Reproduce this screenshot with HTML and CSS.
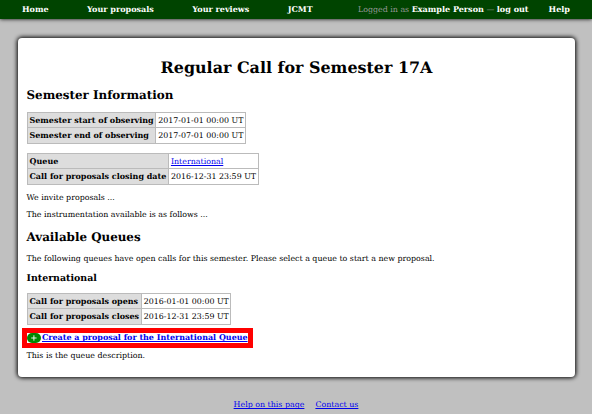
FILE: index.html
```html
<!DOCTYPE html>
<html lang="en">
<head>
<meta charset="utf-8">
<title>Regular Call for Semester 17A</title>
<link rel="stylesheet" href="styles.css">
</head>
<body>
<nav class="bar">
  <a class="home">Home</a><a class="proposals">Your proposals</a><a class="reviews">Your reviews</a><a>JCMT</a>
  <span class="user">Logged in as <a>Example Person</a> — <a>log out</a></span>
  <a class="help">Help</a>
</nav>
<main class="page">
  <h1>Regular Call for Semester 17A</h1>
  <h2>Semester Information</h2>
  <table>
    <tr><th>Semester start of observing</th><td>2017-01-01 00:00 UT</td></tr>
    <tr><th>Semester end of observing</th><td>2017-07-01 00:00 UT</td></tr>
  </table>
  <table class="queue">
    <tr><th>Queue</th><td><a href="#">International</a></td></tr>
    <tr><th>Call for proposals closing date</th><td>2016-12-31 23:59 UT</td></tr>
  </table>
  <p>We invite proposals ...</p>
  <p>The instrumentation available is as follows ...</p>
  <h2 class="available">Available Queues</h2>
  <p>The following queues have open calls for this semester. Please select a queue to start a new proposal.</p>
  <h3>International</h3>
  <table class="call">
    <tr><th>Call for proposals opens</th><td>2016-01-01 00:00 UT</td></tr>
    <tr><th>Call for proposals closes</th><td>2016-12-31 23:59 UT</td></tr>
  </table>
  <div class="create">
    <svg class="plus" viewBox="0 0 14 10"><rect width="14" height="10" rx="5" fill="#008800"/><path d="M4.2 5h5.4M6.9 2.3v5.4" stroke="#fff" stroke-width=".9"/></svg>
    <a href="#">Create a proposal for the International Queue</a>
  </div>
  <p class="description">This is the queue description.</p>
</main>
<footer><a href="#">Help on this page</a><a href="#">Contact us</a></footer>
</body>
</html>
```
FILE: styles.css
```css
* { box-sizing: border-box; }
body {
  margin: 0;
  height: 414px;
  overflow: hidden;
  background: #c0c0c0;
  color: #000;
  font: 7.9px/9.5px "DejaVu Serif", serif;
  text-rendering: geometricPrecision;
}
a { color: #0000ee; }
.bar {
  display: flex;
  align-items: center;
  height: 19.3px;
  padding: 1px 22px 0;
  background: #004400;
  color: #999;
  box-shadow: 0 0 4px #000;
  white-space: pre;
}
.bar a { color: #fff; font-size: 8.05px; font-weight: bold; }
.home, .proposals, .reviews { margin-right: 38.4px; }
.user { margin-left: auto; }
.help { margin-left: 20px; }
.page {
  height: 339px;
  margin: 18.7px 17px 0 18px;
  padding: 20px 8.5px 0;
  border-radius: 4px;
  background: #fff;
  box-shadow: 0 0 4px 1px #000;
}
h1 { margin: 0; font-size: 15.93px; line-height: 19px; text-align: center; }
h2 { margin: 11px 0 10px; font-size: 11.9px; line-height: 14px; }
.available { margin: 10.5px 0 9.5px; }
h3 { margin: 9.5px 0 8px; font-size: 9.45px; line-height: 12px; }
p { margin: 8px 0; }
table { border-collapse: collapse; }
th, td { height: 15.5px; padding: 1px 1.6px 0 2px; border: 1px solid #bbb; text-align: left; }
th { background: #ddd; font-size: 8px; }
.queue { margin-top: 9px; }
.create {
  display: flex;
  align-items: center;
  width: 231px;
  height: 20px;
  margin: 3px 0 0 -5px;
  border: 5px solid #f00;
  font-size: 7.98px;
  font-weight: bold;
  white-space: nowrap;
}
.plus { flex: none; width: 14px; height: 10px; margin-right: 1.5px; }
.description { margin-top: 3px; }
footer { display: flex; justify-content: center; gap: 11px; margin-top: 23.5px; }
```
